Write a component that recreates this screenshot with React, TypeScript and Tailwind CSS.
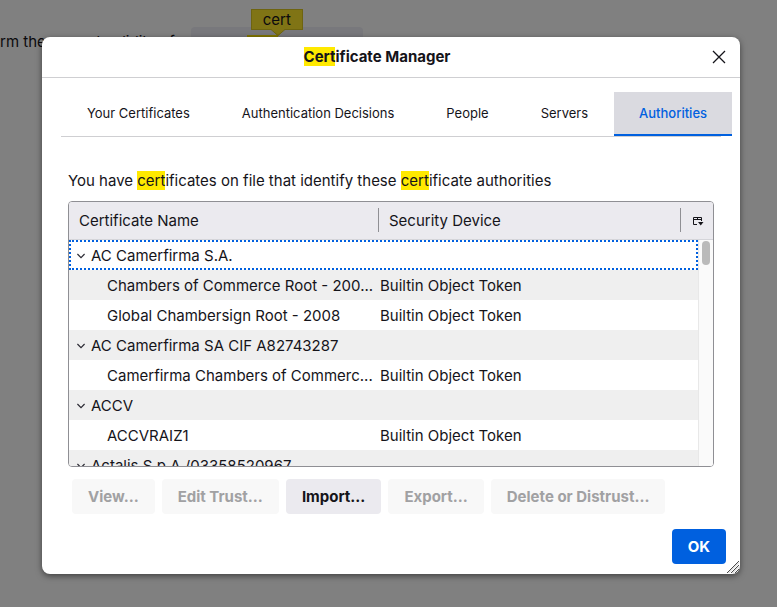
import { Fragment } from "react";
import type { ReactNode } from "react";

const tabs = ["Your Certificates", "Authentication Decisions", "People", "Servers", "Authorities"];

const groups = [
  { name: "AC Camerfirma S.A.", certs: ["Chambers of Commerce Root - 200...", "Global Chambersign Root - 2008"] },
  { name: "AC Camerfirma SA CIF A82743287", certs: ["Camerfirma Chambers of Commerc..."] },
  { name: "ACCV", certs: ["ACCVRAIZ1"] },
  { name: "Actalis S.p.A./03358520967", certs: [] },
];

const actions = [
  { label: "View...", enabled: false },
  { label: "Edit Trust...", enabled: false },
  { label: "Import...", enabled: true },
  { label: "Export...", enabled: false },
  { label: "Delete or Distrust...", enabled: false },
];

function Hit({ children }: { children: ReactNode }) {
  return <mark className="bg-[#ffe900] text-inherit">{children}</mark>;
}

function Chevron() {
  return (
    <svg width="8" height="6" viewBox="0 0 8 6" fill="none" stroke="#2b2a33" strokeWidth="1.2" className="mt-px shrink-0" aria-hidden="true">
      <path d="M0.4 1 L4 4.6 L7.6 1" />
    </svg>
  );
}

function CertificateTable() {
  return (
    <div className="relative min-h-0 flex-1 overflow-hidden rounded border border-[#8f8f94] bg-white">
      <table className="w-full table-fixed border-collapse text-left">
        <colgroup>
          <col className="w-[310px]" />
          <col />
          <col className="w-8" />
        </colgroup>
        <thead className="bg-[#ebeaef]">
          <tr className="h-[37px] border-b border-[#d5d5da]">
            <th className="p-0 font-normal">
              <div className="flex h-6 items-center border-r border-[#8f8f94] pt-[2px] pl-[10px]">Certificate Name</div>
            </th>
            <th className="p-0 font-normal">
              <div className="flex h-6 items-center border-r border-[#8f8f94] pt-[2px] pl-[10px]">Security Device</div>
            </th>
            <th className="p-0">
              <button type="button" aria-label="Select columns to display" className="flex w-full justify-center pt-[2px] pl-[2px]">
                <svg width="12" height="12" viewBox="0 0 12 12" fill="none" stroke="#15141a" aria-hidden="true">
                  <path d="M5 9.5H1.5V2.5H9.5V6M1.5 4.5H9.5M5.5 2.5V5" />
                  <path d="M6 7H11.5L8.75 10.5Z" fill="#15141a" stroke="none" />
                </svg>
              </button>
            </th>
          </tr>
        </thead>
        <tbody>
          {groups.map((group, index) => (
            <Fragment key={group.name}>
              <tr className="odd:bg-white even:bg-[#efefef]">
                <td colSpan={3} className="p-0">
                  <div
                    className={
                      index === 0
                        ? "mr-[15px] flex h-[30px] items-center gap-[6px] pt-[2px] pl-2 outline-2 -outline-offset-2 outline-dotted outline-[#0060df]"
                        : "mr-[15px] flex h-[30px] items-center gap-[6px] pt-[2px] pl-2"
                    }
                  >
                    <Chevron />
                    {group.name}
                  </div>
                </td>
              </tr>
              {group.certs.map((cert) => (
                <tr key={cert} className="h-[30px] odd:bg-white even:bg-[#efefef]">
                  <td className="pt-[2px] pr-0 pb-0 pl-[38px] whitespace-nowrap">{cert}</td>
                  <td colSpan={2} className="pt-[2px] pb-0 pl-px">Builtin Object Token</td>
                </tr>
              ))}
            </Fragment>
          ))}
        </tbody>
      </table>
      <div className="absolute top-[38px] right-0 bottom-0 w-[15px] border-l border-[#e8e8e8] bg-[#fafafa] pt-px pl-[3px]">
        <div className="h-6 w-2 rounded-full bg-[#bababa]" />
      </div>
    </div>
  );
}

export default function App() {
  return (
    <div className="relative h-screen overflow-hidden bg-[#808080] font-['Inter','Liberation_Sans',sans-serif] text-[15px] leading-5 text-[#15141a]">
      <div className="flex items-start pt-[27px] text-[#0b0a0d]">
        <p className="w-[191px] pt-[5px] whitespace-nowrap">rm the current validity of</p>
        <button type="button" className="h-9 w-[172px] rounded bg-[#78787c] px-4 text-left font-semibold whitespace-nowrap">
          View{" "}
          <span className="relative inline-block bg-[#807500]">
            Cert
            <span className="absolute bottom-[25px] left-1 flex h-[21px] w-[52px] items-center justify-center border border-[#6e6410] bg-[#807415] font-normal">
              cert
              <svg width="14" height="7" viewBox="0 0 14 7" className="absolute top-[19px] left-[19px]" aria-hidden="true">
                <path d="M0 0H14L7 7Z" fill="#807415" />
                <path d="M0 0.5L7 6.5L14 0.5" fill="none" stroke="#6e6410" />
              </svg>
            </span>
          </span>
          ificates...
        </button>
      </div>

      <div
        role="dialog"
        aria-labelledby="dialog-title"
        className="absolute top-[37px] right-[37px] bottom-[33px] left-[42px] flex flex-col rounded-lg bg-white shadow-[0_2px_6px_rgba(0,0,0,0.5)]"
      >
        <header className="flex h-[41px] shrink-0 items-center border-b border-[#cfcfd2] pr-[14px]">
          <h1 id="dialog-title" className="flex-1 text-center font-bold">
            <Hit>Cert</Hit>ificate Manager
          </h1>
          <button type="button" aria-label="Close" className="flex h-7 w-[14px] items-center justify-center">
            <svg width="14" height="14" viewBox="0 0 14 14" fill="none" stroke="#15141a" strokeWidth="1.3" aria-hidden="true">
              <path d="M1 1L13 13M13 1L1 13" />
            </svg>
          </button>
        </header>

        <div role="tablist" className="mx-[19px] mt-[14px] flex h-[45px] shrink-0 border-b border-[#cfcfd2] text-[13px]">
          {tabs.map((tab) => (
            <button
              key={tab}
              type="button"
              role="tab"
              aria-selected={tab === "Authorities"}
              className={
                tab === "Authorities"
                  ? "h-11 shrink-0 border-b-2 border-[#0060df] bg-[#dadae0] px-[25px] font-medium text-[#0060df]"
                  : "h-11 shrink-0 px-[26px] pb-[2px]"
              }
            >
              {tab}
            </button>
          ))}
        </div>

        <main className="flex min-h-0 flex-1 flex-col pt-[34px] pr-[26px] pl-[26px]">
          <p className="mb-[10px]">
            You have <Hit>cert</Hit>ificates on file that identify these <Hit>cert</Hit>ificate authorities
          </p>
          <CertificateTable />
          <div className="mt-3 ml-1 flex gap-[7px]">
            {actions.map((action) => (
              <button
                key={action.label}
                type="button"
                disabled={!action.enabled}
                className="h-[35px] rounded bg-[#ebeaef] px-4 font-bold whitespace-nowrap disabled:bg-[#f8f8f8] disabled:text-[#a1a1a3]"
              >
                {action.label}
              </button>
            ))}
          </div>
        </main>

        <footer className="flex shrink-0 justify-end px-[14px] pt-[15px] pb-[10px]">
          <button type="button" className="h-[35px] rounded bg-[#0060df] px-4 font-bold text-white">
            OK
          </button>
        </footer>
        <svg width="14" height="14" viewBox="0 0 14 14" className="absolute right-0 bottom-0" fill="none" aria-hidden="true">
          <path d="M1 13L13 1M5 13L13 5M9 13L13 9" stroke="#4b4b4b" />
          <path d="M2.5 13L13 2.5M6.5 13L13 6.5" stroke="#c8c8c8" />
        </svg>
      </div>
    </div>
  );
}
